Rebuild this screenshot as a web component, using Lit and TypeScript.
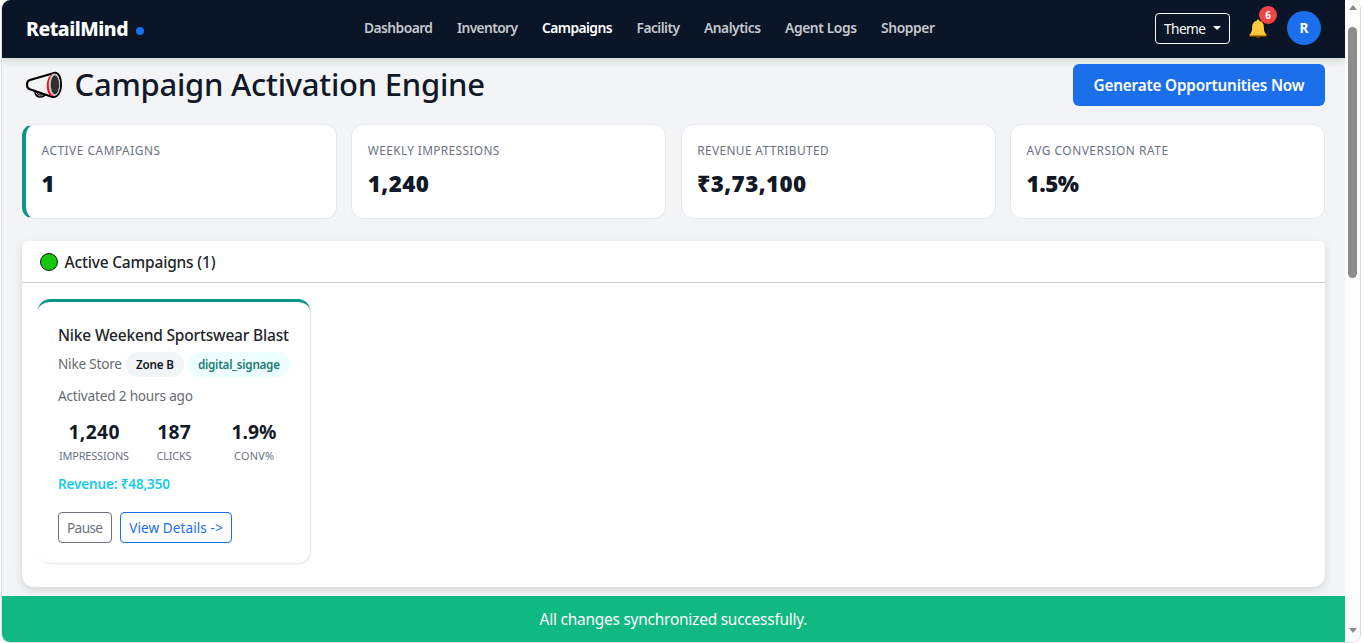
import { LitElement, html, css } from "lit";
import { customElement, property, query } from "lit/decorators.js";
import { classMap } from "lit/directives/class-map.js";

/** One line of text tracked so that it fills the given width in pixels. */
@customElement("fit-text")
class FitText extends LitElement {
  @property() text = "";
  @property({ type: Number }) width = 0;
  @query("span") span!: HTMLSpanElement;

  static styles = css`
    :host { display: inline-block; white-space: nowrap; flex: none; }
    span { display: inline-block; }
  `;

  updated() {
    this.style.width = `${this.width}px`;
    this.span.style.letterSpacing = "0";
    const natural = this.span.getBoundingClientRect().width;
    const gaps = Math.max(1, this.text.length - 1);
    this.span.style.letterSpacing = `${(this.width - natural) / gaps}px`;
  }

  render() {
    return html`<span>${this.text}</span>`;
  }
}

const fit = (text: string, width: number) =>
  html`<fit-text .text=${text} .width=${width}></fit-text>`;

const NAV = [
  { label: "Dashboard", width: 69 },
  { label: "Inventory", width: 61 },
  { label: "Campaigns", width: 70.5, active: true },
  { label: "Facility", width: 43.5 },
  { label: "Analytics", width: 57 },
  { label: "Agent Logs", width: 72 },
  { label: "Shopper", width: 54 },
];

const KPIS = [
  { label: "ACTIVE CAMPAIGNS", lw: 118.5, value: "1", vw: 13, accent: true },
  { label: "WEEKLY IMPRESSIONS", lw: 131.5, value: "1,240", vw: 61 },
  { label: "REVENUE ATTRIBUTED", lw: 131.5, value: "₹3,73,100", vw: 109 },
  { label: "AVG CONVERSION RATE", lw: 141.5, value: "1.5%", vw: 52.5 },
];

const STATS = [
  { value: "1,240", vw: 51, label: "IMPRESSIONS", lw: 70 },
  { value: "187", vw: 33.5, label: "CLICKS", lw: 35 },
  { value: "1.9%", vw: 45, label: "CONV%", lw: 40 },
];

@customElement("app-root")
class AppRoot extends LitElement {
  static styles = css`
    :host {
      display: block;
      width: 1364px;
      height: 643px;
      overflow: hidden;
      background: #fff;
      font-family: "Noto Sans", "Open Sans", sans-serif;
      color: #111827;
    }
    * { box-sizing: border-box; }
    .window {
      display: flex;
      width: 1360px;
      height: 643px;
      margin-left: 1px;
      border: 1px solid #d9dbde;
      border-top: 0;
      border-radius: 9px;
      overflow: hidden;
    }
    .page {
      width: 1343px;
      height: 642px;
      display: flex;
      flex-direction: column;
      background: #f3f4f6;
    }
    header {
      flex: none;
      display: flex;
      align-items: center;
      height: 58px;
      padding: 0 24px;
      background: #0a1628;
      box-shadow: 0 2px 8px rgba(0, 0, 0, 0.17);
    }
    .brand {
      display: flex;
      align-items: center;
      gap: 7px;
      width: 338px;
      color: #fff;
      font-size: 19.4px;
      font-weight: 800;
      line-height: 28px;
    }
    .dot { width: 8px; height: 8px; margin-top: 4px; border-radius: 50%; background: #1b6fea; }
    nav {
      display: flex;
      gap: 24px;
      font-size: 13.8px;
      font-weight: 600;
      line-height: 22px;
      color: #c5c8cd;
      padding-bottom: 2px;
    }
    .active { color: #fff; }
    .tools { margin-left: auto; display: flex; align-items: center; padding-bottom: 2px; }
    .theme {
      display: flex;
      align-items: center;
      width: 75px;
      height: 31px;
      margin-top: 1px;
      padding: 0 8px;
      border: 1px solid #f8f9fa;
      border-radius: 4px;
      color: #f8f9fa;
      font-size: 13.7px;
      line-height: 21px;
    }
    .caret {
      margin: 0 0 2px 7px;
      border: 4px solid transparent;
      border-top-color: #fff;
      border-bottom: 0;
    }
    .bell { position: relative; width: 20px; height: 22px; margin: 2px 19px 0 18px; }
    .bell svg { display: block; }
    .count {
      position: absolute;
      left: 11px;
      top: -12px;
      width: 18px;
      height: 18px;
      border-radius: 50%;
      background: #ef4444;
      color: #fff;
      font-size: 10px;
      font-weight: 700;
      line-height: 18px;
      text-align: center;
    }
    .avatar {
      width: 34px;
      height: 34px;
      border-radius: 50%;
      background: #1b6fea;
      color: #fff;
      font-size: 13.6px;
      font-weight: 700;
      line-height: 34px;
      text-align: center;
    }
    main { flex: 1; padding: 6px 20px 0; }
    .title { display: flex; align-items: center; height: 42px; }
    .horn { flex: none; margin: 0 11.500px 1px 3px; }
    h1 { margin: 0 0 2px; font-size: 31px; font-weight: 500; line-height: 42px; }
    .generate {
      display: flex;
      align-items: center;
      justify-content: center;
      width: 252px;
      height: 42px;
      margin-left: auto;
      border-radius: 6px;
      background: #1b6fea;
      color: #fff;
      font-size: 15.3px;
      font-weight: 600;
      line-height: 24px;
    }
    .kpis { display: grid; grid-template-columns: repeat(4, 1fr); gap: 14.4px; margin-top: 18px; }
    .kpi {
      height: 95px;
      padding: 16px 16px 0 15.5px;
      border: 1px solid #e5e7eb;
      border-radius: 12px;
      background: #fff;
    }
    .kpi.accent { border-left: 4px solid #0d9488; }
    .kpi-label { display: block; height: 19px; font-size: 11.9px; line-height: 19px; color: #6b7280; }
    .kpi-value { display: block; margin-top: 10px; font-size: 22.4px; font-weight: 900; line-height: 28px; }
    .panel {
      height: 346px;
      margin-top: 22px;
      border-radius: 6px 6px 12px 12px;
      background: #fff;
      box-shadow: 0 3px 8px rgba(0, 0, 0, 0.13);
    }
    .panel-head {
      display: flex;
      align-items: center;
      gap: 6.500px;
      height: 42px;
      padding: 1px 0 0 18px;
      border-bottom: 1px solid #cfd0d2;
      font-size: 15.5px;
      font-weight: 500;
      line-height: 24px;
      color: #212529;
    }
    .status { width: 18px; height: 18px; border: 1.4px solid #0a1a08; border-radius: 50%; background: #16c60c; }
    .panel-body { padding: 16px; }
    .campaign {
      width: 272px;
      height: 264px;
      padding: 21px 20px 0;
      border-top: 3px solid #0d9488;
      border-radius: 12px;
      background: #fff;
      box-shadow: 1px 1px 2px rgba(0, 0, 0, 0.11);
    }
    .name { height: 24px; font-size: 15.5px; font-weight: 500; line-height: 24px; color: #212529; }
    .place { display: flex; align-items: center; height: 25px; margin-top: 5px; gap: 4px; font-size: 13.6px; line-height: 20px; color: #666b70; }
    .place > fit-text { margin-bottom: 1px; }
    .tag {
      display: flex;
      justify-content: center;
      height: 25px;
      border-radius: 13px;
      font-size: 11.7px;
      font-weight: 600;
      line-height: 25px;
    }
    .zone { width: 58px; background: #f3f4f6; color: #111827; }
    .channel { width: 102px; background: #ecfeff; color: #1c7c74; }
    .when { height: 21px; margin-top: 8px; font-size: 13.6px; line-height: 21px; color: #666b70; }
    .stats { display: flex; gap: 8px; margin-top: 14px; }
    .stat { width: 72px; display: flex; flex-direction: column; align-items: center; }
    .stat-value { height: 24px; font-size: 19.3px; font-weight: 700; line-height: 24px; }
    .stat-label { height: 17px; margin-top: 3px; font-size: 10.9px; line-height: 17px; color: #6b7280; }
    .revenue { height: 21px; margin-top: 10px; font-size: 13.5px; font-weight: 600; line-height: 21px; color: #17c9ee; }
    .actions { display: flex; gap: 8px; margin-top: 17px; }
    .btn {
      display: flex;
      align-items: center;
      justify-content: center;
      height: 31px;
      border: 1px solid currentColor;
      border-radius: 4px;
      font-size: 13.6px;
      line-height: 21px;
    }
    .pause { width: 54px; color: #6c757d; }
    .details { width: 112px; color: #1b6fea; }
    .toast {
      flex: none;
      position: relative;
      display: flex;
      align-items: center;
      justify-content: center;
      height: 46px;
      padding-top: 2px;
      background: #10b981;
      color: #fff;
      font-size: 15.4px;
      line-height: 24px;
    }
    .scroll {
      width: 15px;
      height: 642px;
      display: flex;
      flex-direction: column;
      align-items: center;
      background: #fcfcfc;
    }
    .up { margin-top: 5px; border: 4.5px solid transparent; border-top: 0; border-bottom: 5px solid #8a8a8a; }
    .thumb { width: 9px; height: 251px; margin-top: 17px; border-radius: 5px; background: #8b8b8b; }
    .down { margin: auto 0 9px; border: 4.5px solid transparent; border-bottom: 0; border-top: 5px solid #8a8a8a; }
  `;

  render() {
    return html`
      <div class="window">
        <div class="page">
          <header>
            <div class="brand">${fit("RetailMind", 102.5)}<i class="dot"></i></div>
            <nav>
              ${NAV.map((n) => html`<a class=${classMap({ active: !!n.active })}>${fit(n.label, n.width)}</a>`)}
            </nav>
            <div class="tools">
              <div class="theme">${fit("Theme", 42)}<i class="caret"></i></div>
              <div class="bell">
                <svg width="20" height="22" viewBox="0 0 20 22">
                  <path d="M7.3 18h5.400c0 1.600-1.100 2.700-2.700 2.700s-2.700-1.100-2.700-2.700z" fill="#a5590b" stroke="#050505" stroke-width=".8" />
                  <path d="M10 .9c-.9 0-1.600.7-1.600 1.500C5.400 3.100 3.700 5.400 3.700 8.400c0 4-.6 6.100-2.600 8.200v2.200h17.800v-2.200c-2-2.100-2.600-4.200-2.600-8.200 0-3-1.700-5.300-4.700-6 0-.8-.7-1.500-1.600-1.500z" fill="#ffc83d" stroke="#050505" stroke-width="1" />
                  <path d="M1.700 17h16.600v1.300H1.700z" fill="#d67d00" />
                </svg>
                <span class="count">6</span>
              </div>
              <div class="avatar">R</div>
            </div>
          </header>
          <main>
            <div class="title">
              <svg class="horn" width="38" height="28" viewBox="0 0 39 28">
                <path d="M11 20c0 3.500 2 5.500 4.500 5.500S20 24 20.500 22.500" fill="none" stroke="#000" stroke-width="3.400" />
                <path d="M11.200 20c0 3.300 2 5.200 4.300 5.200s4.200-1.200 4.700-3" fill="none" stroke="#d0d0d0" stroke-width=".8" />
                <path d="M30 1.600 5 8.800C2.500 9.500 2 11.500 2 13.500s.8 4.100 3 4.900L27.500 26c6 1.500 9.500-5 9.500-12.300S34.500.8 30 1.600z" fill="#f4f4f5" stroke="#000" stroke-width="2.100" stroke-linejoin="round" />
                <path d="M28.500 2.600C21.300 5 20.300 20 26 25l3.500.6V2.500z" fill="#e8122b" />
                <ellipse cx="30.200" cy="13.800" rx="5.900" ry="11.500" fill="#c9c9c9" />
                <ellipse cx="30.700" cy="13.800" rx="4.300" ry="9.800" fill="#303030" />
              </svg>
              <h1>${fit("Campaign Activation Engine", 410.5)}</h1>
              <div class="generate">${fit("Generate Opportunities Now", 211)}</div>
            </div>
            <section class="kpis">
              ${KPIS.map((k) => html`
                <div class=${classMap({ kpi: true, accent: !!k.accent })}>
                  <div class="kpi-label">${fit(k.label, k.lw)}</div>
                  <div class="kpi-value">${fit(k.value, k.vw)}</div>
                </div>`)}
            </section>
            <section class="panel">
              <div class="panel-head"><i class="status"></i>${fit("Active Campaigns (1)", 151)}</div>
              <div class="panel-body">
                <article class="campaign">
                  <div class="name">${fit("Nike Weekend Sportswear Blast", 231)}</div>
                  <div class="place">
                    ${fit("Nike Store", 64)}
                    <span class="tag zone">${fit("Zone B", 38)}</span>
                    <span class="tag channel">${fit("digital_signage", 82)}</span>
                  </div>
                  <div class="when">${fit("Activated 2 hours ago", 135)}</div>
                  <div class="stats">
                    ${STATS.map((s) => html`
                      <div class="stat">
                        <div class="stat-value">${fit(s.value, s.vw)}</div>
                        <div class="stat-label">${fit(s.label, s.lw)}</div>
                      </div>`)}
                  </div>
                  <div class="revenue">${fit("Revenue: ₹48,350", 112)}</div>
                  <div class="actions">
                    <div class="btn pause">${fit("Pause", 36)}</div>
                    <div class="btn details">${fit("View Details ->", 93.5)}</div>
                  </div>
                </article>
              </div>
            </section>
          </main>
          <div class="toast">${fit("All changes synchronized successfully.", 268)}</div>
        </div>
        <div class="scroll"><i class="up"></i><i class="thumb"></i><i class="down"></i></div>
      </div>
    `;
  }
}
